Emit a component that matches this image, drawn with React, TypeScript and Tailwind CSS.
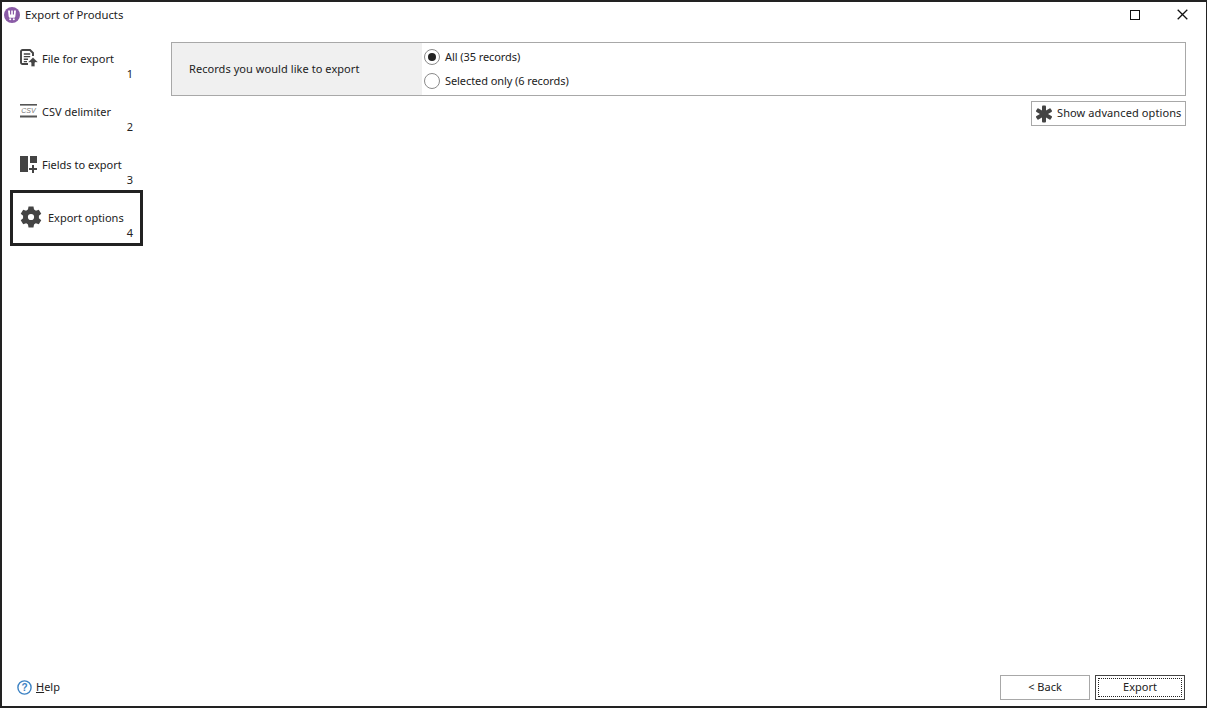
const font = { fontFamily: '"Noto Sans", "Open Sans", sans-serif' };

function FileIcon() {
  return (
    <svg width="18" height="18" viewBox="0 0 18 18" fill="none">
      <path d="M8 15H2.5C1.7 15 1 14.3 1 13.5V2.5C1 1.7 1.7 1 2.5 1H10L13 4V7" stroke="#444" strokeWidth="1.9" />
      <path d="M3.8 5H10.2M3.8 7.6H10.2M3.8 10.2H8M3.8 12.6H7" stroke="#444" strokeWidth="1.4" />
      <path d="M13 8.2L17.6 12.8V13.6H15V17.8H11V13.6H8.4V12.8L13 8.2Z" fill="#444" stroke="#fff" strokeWidth="0.8" />
    </svg>
  );
}

function CsvIcon() {
  return (
    <svg width="18" height="14" viewBox="0 0 18 14">
      <rect x="0" y="0" width="17" height="1.6" fill="#555" />
      <rect x="0" y="11.5" width="17" height="2" fill="#555" />
      <text x="1.2" y="9" fontSize="7" fontStyle="italic" fill="#777" fontFamily="Liberation Sans, sans-serif">CSV</text>
    </svg>
  );
}

function FieldsIcon() {
  return (
    <svg width="18" height="17" viewBox="0 0 18 17">
      <rect x="0" y="0" width="8" height="16" fill="#444" />
      <rect x="10" y="0" width="7" height="7" fill="#444" />
      <path d="M12 9H14V12H17V14H14V17H12V14H9V12H12V9Z" fill="#444" />
    </svg>
  );
}

function GearIcon() {
  return (
    <svg width="22" height="22" viewBox="0 0 24 24" fill="#444">
      <path fillRule="evenodd" d="M9.3 0.6H14.7L15.3 3.9C16 4.2 16.7 4.6 17.3 5.1L20.5 4L23.2 8.4L20.6 10.6C20.7 11.4 20.7 12.6 20.6 13.4L23.2 15.6L20.5 20L17.3 18.9C16.7 19.4 16 19.8 15.3 20.1L14.7 23.4H9.3L8.7 20.1C8 19.8 7.3 19.4 6.7 18.9L3.5 20L0.8 15.6L3.4 13.4C3.3 12.6 3.3 11.4 3.4 10.6L0.8 8.4L3.5 4L6.7 5.1C7.3 4.6 8 4.2 8.7 3.9L9.3 0.6ZM12 8.6A3.4 3.4 0 1 0 12 15.4A3.4 3.4 0 1 0 12 8.6Z" />
    </svg>
  );
}

function NavItem({ icon, label, num }: { icon: React.ReactNode; label: string; num: string }) {
  return (
    <div className="h-[53px] w-[133px] px-[10px] pt-[15px]">
      <div className="flex h-[18px] items-center">
        <div className="flex w-[22px] shrink-0 items-center">{icon}</div>
        <span className="text-[11px] leading-none text-[#222]">{label}</span>
      </div>
      <div className="text-right text-[11px] leading-[14px] text-[#222]">{num}</div>
    </div>
  );
}

export default function App() {
  return (
    <div style={font} className="flex h-[708px] w-[1207px] flex-col overflow-hidden border-2 border-r-[1.5px] border-[#222] bg-white text-[#222]">
      <header className="flex h-[27px] shrink-0 items-center pl-[2px]">
        <svg width="16" height="16" viewBox="0 0 16 16" className="-mt-[2px] mr-[5px]">
          <circle cx="8" cy="8" r="8" fill="#8a5ba6" />
          <path d="M4 3.5H6V7.5H7.2V3.5H8.8V7.5H10V3.5H12L11.3 9.5C11.2 10.3 10.6 10.8 9.8 10.8H6.2C5.4 10.8 4.8 10.3 4.7 9.5L4 3.5Z" fill="#fff" />
          <circle cx="6.2" cy="12.3" r="1" fill="#fff" />
          <circle cx="9.8" cy="12.3" r="1" fill="#fff" />
        </svg>
        <span className="-mt-[2px] text-[11.3px] leading-none text-[#222]">Export of Products</span>
        <div className="-mt-[2px] ml-auto flex items-center">
          <div className="mr-[37px] h-[10px] w-[10px] border-[1.5px] border-[#111]" />
          <svg width="11" height="11" viewBox="0 0 11 11" className="mr-[18px]">
            <path d="M0.7 0.7L10.3 10.3M10.3 0.7L0.7 10.3" stroke="#111" strokeWidth="1.3" />
          </svg>
        </div>
      </header>

      <div className="flex min-h-0 flex-1">
        <aside className="w-[169px] shrink-0 pl-[8px] pt-[5px]">
          <NavItem icon={<FileIcon />} label="File for export" num="1" />
          <NavItem icon={<CsvIcon />} label="CSV delimiter" num="2" />
          <NavItem icon={<FieldsIcon />} label="Fields to export" num="3" />
          <div className="-mt-[3px] h-[56px] w-[133px] border-[3px] border-[#222] pl-[7px] pr-[7px] pt-[15px]">
            <div className="flex h-[18px] items-center">
              <div className="flex w-[28px] shrink-0 items-center"><GearIcon /></div>
              <span className="text-[11px] leading-none text-[#222]">Export options</span>
            </div>
            <div className="text-right text-[11px] leading-[14px] text-[#222]">4</div>
          </div>
        </aside>

        <main className="flex-1 pr-[20px] pt-[13px]">
          <section className="flex h-[54px] border border-[#a8a8a8]">
            <div className="flex w-[250px] items-center bg-[#f0f0f0] pl-[17px] text-[11px] tracking-[0.06px] text-[#222]">
              Records you would like to export
            </div>
            <div className="flex flex-1 flex-col justify-center gap-[8px] pl-[2px] text-[11px] tracking-[-0.08px] text-[#222]">
              <label className="flex h-[16px] items-center gap-[5px]">
                <span className="flex h-[16px] w-[16px] items-center justify-center rounded-full border border-[#8a8a8a]">
                  <span className="h-[8px] w-[8px] rounded-full bg-[#222]" />
                </span>
                All (35 records)
              </label>
              <label className="flex h-[16px] items-center gap-[5px]">
                <span className="h-[16px] w-[16px] rounded-full border border-[#8a8a8a]" />
                Selected only (6 records)
              </label>
            </div>
          </section>
          <div className="mt-[5px] flex justify-end">
            <button className="flex h-[25px] w-[155px] items-center border border-[#a8a8a8] pl-[3px] text-[11px] tracking-[0.1px] text-[#222]">
              <svg width="18" height="18" viewBox="0 0 18 18" className="mr-[4px]">
                <g fill="#444">
                  <rect x="7" y="0.5" width="4" height="17" rx="1" />
                  <rect x="7" y="0.5" width="4" height="17" rx="1" transform="rotate(60 9 9)" />
                  <rect x="7" y="0.5" width="4" height="17" rx="1" transform="rotate(120 9 9)" />
                </g>
              </svg>
              Show advanced options
            </button>
          </div>
        </main>
      </div>

      <footer className="flex h-[40px] shrink-0 items-start pt-[9px]">
        <div className="ml-[15px] flex h-[24px] items-center text-[11px] text-[#222]">
          <svg width="15" height="15" viewBox="0 0 15 15" className="mr-[4px]">
            <circle cx="7.5" cy="7.5" r="6.6" fill="none" stroke="#3d83c4" strokeWidth="1.4" />
            <text x="7.5" y="11" textAnchor="middle" fontSize="10" fontWeight="700" fill="#3d83c4" fontFamily="Liberation Sans, sans-serif">?</text>
          </svg>
          <span><span className="underline">H</span>elp</span>
        </div>
        <div className="ml-auto mr-[21px] flex gap-[5px]">
          <button className="h-[25px] w-[90px] border border-[#a8a8a8] text-[11px] text-[#222]">&lt; Back</button>
          <button className="h-[25px] w-[90px] border border-[#444] p-[2px] text-[11px] text-[#222]">
            <span className="flex h-full w-full items-center justify-center border border-dotted border-[#222]">Export</span>
          </button>
        </div>
      </footer>
    </div>
  );
}
